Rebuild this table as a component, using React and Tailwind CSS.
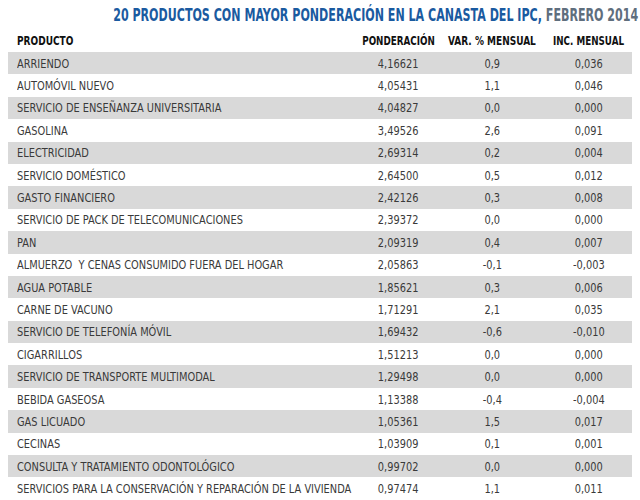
import React from "react";

const rows = [
  ["ARRIENDO", "4,16621", "0,9", "0,036"],
  ["AUTOMÓVIL NUEVO", "4,05431", "1,1", "0,046"],
  ["SERVICIO DE ENSEÑANZA UNIVERSITARIA", "4,04827", "0,0", "0,000"],
  ["GASOLINA", "3,49526", "2,6", "0,091"],
  ["ELECTRICIDAD", "2,69314", "0,2", "0,004"],
  ["SERVICIO DOMÉSTICO", "2,64500", "0,5", "0,012"],
  ["GASTO FINANCIERO", "2,42126", "0,3", "0,008"],
  ["SERVICIO DE PACK DE TELECOMUNICACIONES", "2,39372", "0,0", "0,000"],
  ["PAN", "2,09319", "0,4", "0,007"],
  ["ALMUERZO  Y CENAS CONSUMIDO FUERA DEL HOGAR", "2,05863", "-0,1", "-0,003"],
  ["AGUA POTABLE", "1,85621", "0,3", "0,006"],
  ["CARNE DE VACUNO", "1,71291", "2,1", "0,035"],
  ["SERVICIO DE TELEFONÍA MÓVIL", "1,69432", "-0,6", "-0,010"],
  ["CIGARRILLOS", "1,51213", "0,0", "0,000"],
  ["SERVICIO DE TRANSPORTE MULTIMODAL", "1,29498", "0,0", "0,000"],
  ["BEBIDA GASEOSA", "1,13388", "-0,4", "-0,004"],
  ["GAS LICUADO", "1,05361", "1,5", "0,017"],
  ["CECINAS", "1,03909", "0,1", "0,001"],
  ["CONSULTA Y TRATAMIENTO ODONTOLÓGICO", "0,99702", "0,0", "0,000"],
  ["SERVICIOS PARA LA CONSERVACIÓN Y REPARACIÓN DE LA VIVIENDA", "0,97474", "1,1", "0,011"],
];

const font = { fontFamily: '"DejaVu Sans Condensed", "DejaVu Sans", sans-serif' };

export default function App() {
  return (
    <div className="w-[640px] h-[500px] bg-white overflow-hidden" style={font}>
      <div className="h-[30px] flex items-center justify-end pr-[2px] leading-none whitespace-pre">
        <span className="inline-block origin-right scale-x-[0.725] text-[17px] font-bold">
          <span className="text-[#1a5aa0]">20 PRODUCTOS CON MAYOR PONDERACIÓN EN LA CANASTA DEL IPC, </span>
          <span className="text-[#5f6e7d]">FEBRERO 2014</span>
        </span>
      </div>
      <div className="h-[22px] mx-[8px] grid grid-cols-[350px_80px_108px_86px] items-center text-[12.5px] font-bold text-[#111] leading-none whitespace-pre">
        <div className="pl-[9px]"><span className="inline-block origin-left scale-x-[0.8]">PRODUCTO</span></div>
        <div className="flex justify-center"><span className="inline-block scale-x-[0.78]">PONDERACIÓN</span></div>
        <div className="flex justify-center"><span className="inline-block scale-x-[0.8]">VAR. % MENSUAL</span></div>
        <div className="flex justify-center"><span className="inline-block scale-x-[0.78]">INC. MENSUAL</span></div>
      </div>
      <div className="flex flex-col">
        {rows.map((r, i) => (
          <div
            key={i}
            className={`h-[22.4px] mx-[8px] grid grid-cols-[350px_80px_108px_86px] items-center text-[13px] text-[#3a3a3a] leading-none whitespace-pre ${i % 2 === 0 ? "bg-[#d9d9d9]" : "bg-white"}`}
          >
            <div className="pl-[9px] overflow-visible"><span className="inline-block origin-left scale-x-[0.84]">{r[0]}</span></div>
            <div className="flex justify-center"><span className="inline-block scale-x-[0.84]">{r[1]}</span></div>
            <div className="flex justify-center"><span className="inline-block scale-x-[0.84]">{r[2]}</span></div>
            <div className="flex justify-center"><span className="inline-block scale-x-[0.84]">{r[3]}</span></div>
          </div>
        ))}
      </div>
    </div>
  );
}
